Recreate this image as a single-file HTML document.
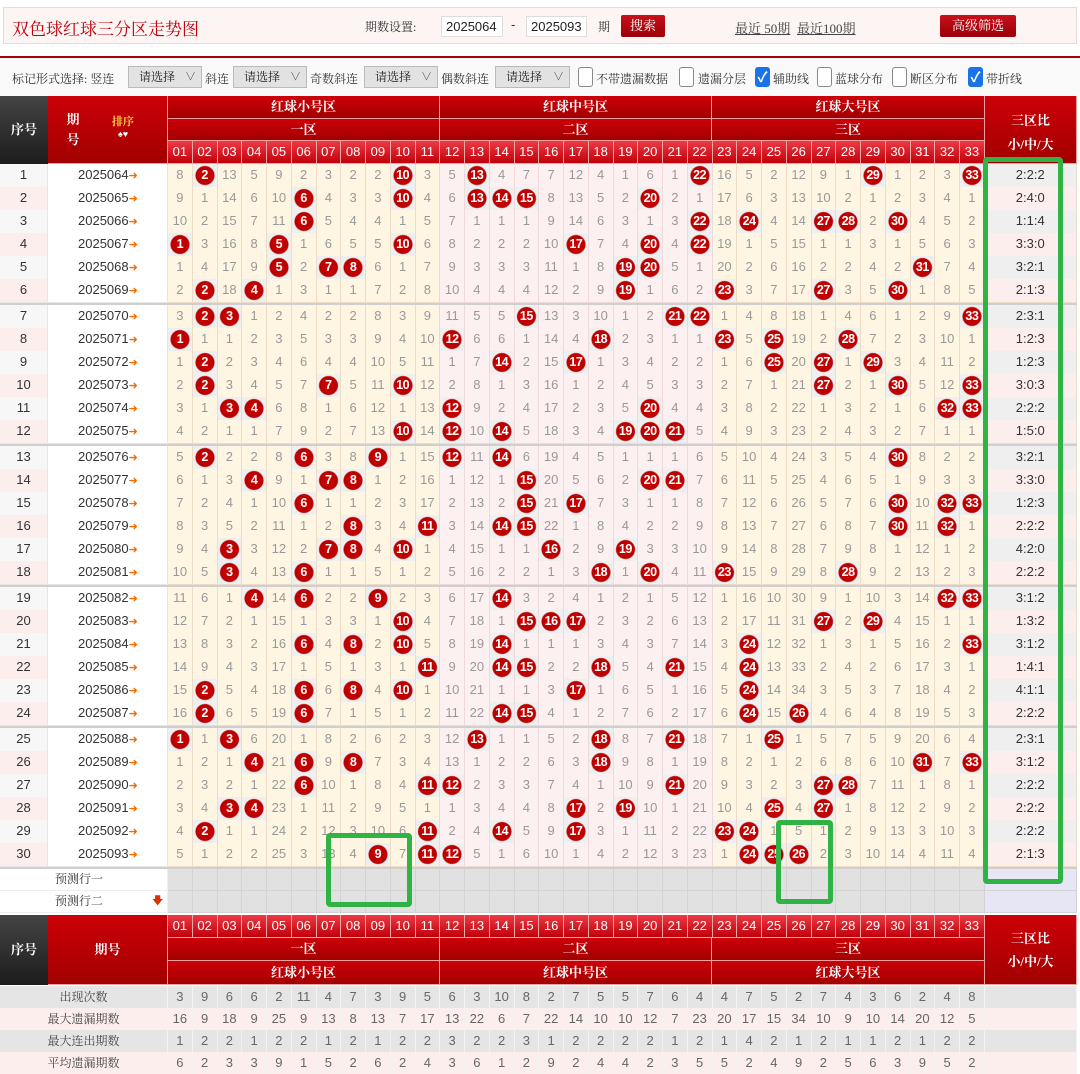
<!DOCTYPE html>
<html><head><meta charset="utf-8">
<style>
*{box-sizing:border-box;margin:0;padding:0}
i{font-style:normal}
body{width:1080px;height:1065px;overflow:hidden;background:#fff;font-family:"Liberation Sans","Noto Sans CJK SC",sans-serif;position:relative;color:#333}
.ab{position:absolute}
.cn{font-family:"Liberation Serif","Noto Serif CJK SC",serif}
#top{left:3px;top:7px;width:1074px;height:37px;background:#fdf4f4;border:1px solid #f1d4d4}
.inp{background:#fff;border:1px solid #ddd;height:21px;font-size:13px;line-height:19px;padding-left:4px;color:#222}
.btn{background:linear-gradient(#c8101a,#9a0008);color:#fff;font-size:13px;text-align:center;line-height:22px;height:22px;border-radius:2px}
#line{left:0;top:56px;width:1080px;height:2px;background:#a8000a}
#flt{left:0;top:58px;width:1080px;height:38px;background:#f9f9f9}
.ft{font-size:12px;top:70px;color:#333}
.sel{top:66px;height:22px;background:#e2e2e2;border:1px solid #bbb;font-size:12px;line-height:20px;padding-left:10px;color:#222}
.sel:after{content:"∨";position:absolute;right:5px;top:0;font-size:11px;color:#444}
.cb{top:67px;width:15px;height:20px;border:1px solid #888;border-radius:3px;background:#fff}
.cb.on{background:#1a73e8;border-color:#1a73e8;color:#fff;font-size:14px;line-height:18px;text-align:center;font-weight:bold}
.red{background:linear-gradient(#cc0008,#a20000);color:#fff;text-align:center;font-size:13px;border-right:1px solid #e9a0a0;border-bottom:1px solid #e9a0a0}
.dark{background:linear-gradient(#444,#1c1c1c);color:#fff;text-align:center;font-size:13px;font-weight:bold}
.nums{display:grid;grid-template-columns:repeat(33,24.758px);height:23px}
.nums div{background:linear-gradient(#ee3a44,#c0000a);color:#fff;font-size:13px;text-align:center;line-height:22px;border-right:1px solid #f3a8a8;border-bottom:1px solid #f3a8a8}
#rows{left:0;top:164px;width:1077px}
.r{display:grid;grid-template-columns:48px 120px repeat(33,24.758px) 92px;height:23px}
.r>*{font-style:normal;font-size:13px;line-height:22px;text-align:center;color:#999;border-right:1px solid #ecdcc8;border-bottom:1px solid #ecdcc8;text-decoration:none}
.r>s{color:#333;background:#f7f7f7;border-color:#e6e6e6}
.r>u{color:#333;background:#fff;border-color:#e6e6e6;text-align:left;padding-left:30px}
.r>u a{color:#f26b00;font-size:11px}
.r>:nth-child(n+3):nth-child(-n+13),.r>:nth-child(n+25):nth-child(-n+35){background:#fff5e3}
.r>:nth-child(n+14):nth-child(-n+24){background:#fdf0f0;border-color:#eedada}
.r>b{background:radial-gradient(circle,#d00000 0,#b80000 9px,transparent 10px),#efefef!important;color:#fff;font-weight:bold;font-size:12.5px;letter-spacing:-0.5px}
.r>em{color:#333;background:#efefef}
.r:nth-child(even)>em,.r:nth-child(even)>s{background:#fdeeee}
.sep{height:3px;background:#cfcfcf}
.pr{display:grid;grid-template-columns:168px repeat(33,24.758px) 92px;height:22px}
.pr>*{background:#e1e1e1;border-right:1px solid #d3d3d3;border-bottom:1px solid #d3d3d3;font-size:12px;line-height:21px}
.pr>:first-child{background:#fff;padding-left:55px;position:relative;border-color:#eee}
.pr>:last-child{background:#e6e6f4}
.st{display:grid;grid-template-columns:168px repeat(33,24.758px) 92px;height:22px}
.st>*{font-size:13px;line-height:22px;text-align:center;color:#666;border-right:1px solid #f2f2f2}
.st.g>*{background:#e5e5e5}
.st.p>*{background:#fdeeee}
.st>:first-child{font-size:12px;color:#444}
.box{border:5px solid #2fb344;border-radius:4px}
</style></head><body>

<div id="top" class="ab"></div>
<div class="ab cn" style="left:12px;top:15px;font-size:17px;color:#c0000a">双色球红球三分区走势图</div>
<div class="ab cn" style="left:365px;top:18px;font-size:12px">期数设置:</div>
<div class="ab inp" style="left:441px;top:16px;width:62px">2025064</div>
<div class="ab" style="left:511px;top:17px;font-size:13px">-</div>
<div class="ab inp" style="left:526px;top:16px;width:61px">2025093</div>
<div class="ab cn" style="left:598px;top:18px;font-size:12px">期</div>
<div class="ab btn cn" style="left:621px;top:15px;width:44px">搜索</div>
<div class="ab cn" style="left:735px;top:18px;font-size:13px;text-decoration:underline;color:#444">最近 50期</div>
<div class="ab cn" style="left:797px;top:18px;font-size:13px;text-decoration:underline;color:#444">最近100期</div>
<div class="ab btn cn" style="left:940px;top:15px;width:76px">高级筛选</div>

<div id="line" class="ab"></div>
<div id="flt" class="ab"></div>
<div class="ab ft cn" style="left:12px">标记形式选择: 竖连</div>
<div class="ab sel cn" style="left:128px;width:74px">请选择</div>
<div class="ab ft cn" style="left:205px">斜连</div>
<div class="ab sel cn" style="left:233px;width:74px">请选择</div>
<div class="ab ft cn" style="left:310px">奇数斜连</div>
<div class="ab sel cn" style="left:364px;width:74px">请选择</div>
<div class="ab ft cn" style="left:441px">偶数斜连</div>
<div class="ab sel cn" style="left:495px;width:75px">请选择</div>
<div class="ab cb" style="left:578px"></div><div class="ab ft cn" style="left:596px">不带遗漏数据</div>
<div class="ab cb" style="left:679px"></div><div class="ab ft cn" style="left:698px">遗漏分层</div>
<div class="ab cb on" style="left:755px">✓</div><div class="ab ft cn" style="left:773px">辅助线</div>
<div class="ab cb" style="left:817px"></div><div class="ab ft cn" style="left:835px">蓝球分布</div>
<div class="ab cb" style="left:892px"></div><div class="ab ft cn" style="left:910px">断区分布</div>
<div class="ab cb on" style="left:968px">✓</div><div class="ab ft cn" style="left:986px">带折线</div>

<div class="ab dark cn" style="left:0;top:96px;width:48px;height:68px;line-height:68px">序号</div>
<div class="ab red cn" style="left:48px;top:96px;width:120px;height:68px;font-weight:bold"><div class="ab" style="left:18px;top:14px;width:14px;line-height:20px">期<br>号</div><div class="ab" style="left:64px;top:20px;font-size:11px;color:#ffd24a;line-height:12px">排序<br><span style="color:#fff;font-size:9px">♠♥</span></div></div>
<div class="ab red cn" style="left:168px;top:96px;width:272px;height:23px;line-height:22px;font-weight:bold">红球小号区</div>
<div class="ab red cn" style="left:440px;top:96px;width:272px;height:23px;line-height:22px;font-weight:bold">红球中号区</div>
<div class="ab red cn" style="left:712px;top:96px;width:273px;height:23px;line-height:22px;font-weight:bold">红球大号区</div>
<div class="ab red cn" style="left:168px;top:119px;width:272px;height:22px;line-height:21px;font-weight:bold">一区</div>
<div class="ab red cn" style="left:440px;top:119px;width:272px;height:22px;line-height:21px;font-weight:bold">二区</div>
<div class="ab red cn" style="left:712px;top:119px;width:273px;height:22px;line-height:21px;font-weight:bold">三区</div>
<div class="ab nums" style="left:168px;top:141px"><div>01</div><div>02</div><div>03</div><div>04</div><div>05</div><div>06</div><div>07</div><div>08</div><div>09</div><div>10</div><div>11</div><div>12</div><div>13</div><div>14</div><div>15</div><div>16</div><div>17</div><div>18</div><div>19</div><div>20</div><div>21</div><div>22</div><div>23</div><div>24</div><div>25</div><div>26</div><div>27</div><div>28</div><div>29</div><div>30</div><div>31</div><div>32</div><div>33</div></div>
<div class="ab red cn" style="left:985px;top:96px;width:92px;height:68px;padding-top:13px;line-height:24px;font-weight:bold">三区比<br>小/中/大</div>

<div id="rows" class="ab">
<div>
<div class="r"><s>1</s><u>2025064<a>➜</a></u><i>8</i><b>2</b><i>13</i><i>5</i><i>9</i><i>2</i><i>3</i><i>2</i><i>2</i><b>10</b><i>3</i><i>5</i><b>13</b><i>4</i><i>7</i><i>7</i><i>12</i><i>4</i><i>1</i><i>6</i><i>1</i><b>22</b><i>16</i><i>5</i><i>2</i><i>12</i><i>9</i><i>1</i><b>29</b><i>1</i><i>2</i><i>3</i><b>33</b><em>2:2:2</em></div>
<div class="r"><s>2</s><u>2025065<a>➜</a></u><i>9</i><i>1</i><i>14</i><i>6</i><i>10</i><b>6</b><i>4</i><i>3</i><i>3</i><b>10</b><i>4</i><i>6</i><b>13</b><b>14</b><b>15</b><i>8</i><i>13</i><i>5</i><i>2</i><b>20</b><i>2</i><i>1</i><i>17</i><i>6</i><i>3</i><i>13</i><i>10</i><i>2</i><i>1</i><i>2</i><i>3</i><i>4</i><i>1</i><em>2:4:0</em></div>
<div class="r"><s>3</s><u>2025066<a>➜</a></u><i>10</i><i>2</i><i>15</i><i>7</i><i>11</i><b>6</b><i>5</i><i>4</i><i>4</i><i>1</i><i>5</i><i>7</i><i>1</i><i>1</i><i>1</i><i>9</i><i>14</i><i>6</i><i>3</i><i>1</i><i>3</i><b>22</b><i>18</i><b>24</b><i>4</i><i>14</i><b>27</b><b>28</b><i>2</i><b>30</b><i>4</i><i>5</i><i>2</i><em>1:1:4</em></div>
<div class="r"><s>4</s><u>2025067<a>➜</a></u><b>1</b><i>3</i><i>16</i><i>8</i><b>5</b><i>1</i><i>6</i><i>5</i><i>5</i><b>10</b><i>6</i><i>8</i><i>2</i><i>2</i><i>2</i><i>10</i><b>17</b><i>7</i><i>4</i><b>20</b><i>4</i><b>22</b><i>19</i><i>1</i><i>5</i><i>15</i><i>1</i><i>1</i><i>3</i><i>1</i><i>5</i><i>6</i><i>3</i><em>3:3:0</em></div>
<div class="r"><s>5</s><u>2025068<a>➜</a></u><i>1</i><i>4</i><i>17</i><i>9</i><b>5</b><i>2</i><b>7</b><b>8</b><i>6</i><i>1</i><i>7</i><i>9</i><i>3</i><i>3</i><i>3</i><i>11</i><i>1</i><i>8</i><b>19</b><b>20</b><i>5</i><i>1</i><i>20</i><i>2</i><i>6</i><i>16</i><i>2</i><i>2</i><i>4</i><i>2</i><b>31</b><i>7</i><i>4</i><em>3:2:1</em></div>
<div class="r"><s>6</s><u>2025069<a>➜</a></u><i>2</i><b>2</b><i>18</i><b>4</b><i>1</i><i>3</i><i>1</i><i>1</i><i>7</i><i>2</i><i>8</i><i>10</i><i>4</i><i>4</i><i>4</i><i>12</i><i>2</i><i>9</i><b>19</b><i>1</i><i>6</i><i>2</i><b>23</b><i>3</i><i>7</i><i>17</i><b>27</b><i>3</i><i>5</i><b>30</b><i>1</i><i>8</i><i>5</i><em>2:1:3</em></div>
</div><div class="sep"></div>
<div>
<div class="r"><s>7</s><u>2025070<a>➜</a></u><i>3</i><b>2</b><b>3</b><i>1</i><i>2</i><i>4</i><i>2</i><i>2</i><i>8</i><i>3</i><i>9</i><i>11</i><i>5</i><i>5</i><b>15</b><i>13</i><i>3</i><i>10</i><i>1</i><i>2</i><b>21</b><b>22</b><i>1</i><i>4</i><i>8</i><i>18</i><i>1</i><i>4</i><i>6</i><i>1</i><i>2</i><i>9</i><b>33</b><em>2:3:1</em></div>
<div class="r"><s>8</s><u>2025071<a>➜</a></u><b>1</b><i>1</i><i>1</i><i>2</i><i>3</i><i>5</i><i>3</i><i>3</i><i>9</i><i>4</i><i>10</i><b>12</b><i>6</i><i>6</i><i>1</i><i>14</i><i>4</i><b>18</b><i>2</i><i>3</i><i>1</i><i>1</i><b>23</b><i>5</i><b>25</b><i>19</i><i>2</i><b>28</b><i>7</i><i>2</i><i>3</i><i>10</i><i>1</i><em>1:2:3</em></div>
<div class="r"><s>9</s><u>2025072<a>➜</a></u><i>1</i><b>2</b><i>2</i><i>3</i><i>4</i><i>6</i><i>4</i><i>4</i><i>10</i><i>5</i><i>11</i><i>1</i><i>7</i><b>14</b><i>2</i><i>15</i><b>17</b><i>1</i><i>3</i><i>4</i><i>2</i><i>2</i><i>1</i><i>6</i><b>25</b><i>20</i><b>27</b><i>1</i><b>29</b><i>3</i><i>4</i><i>11</i><i>2</i><em>1:2:3</em></div>
<div class="r"><s>10</s><u>2025073<a>➜</a></u><i>2</i><b>2</b><i>3</i><i>4</i><i>5</i><i>7</i><b>7</b><i>5</i><i>11</i><b>10</b><i>12</i><i>2</i><i>8</i><i>1</i><i>3</i><i>16</i><i>1</i><i>2</i><i>4</i><i>5</i><i>3</i><i>3</i><i>2</i><i>7</i><i>1</i><i>21</i><b>27</b><i>2</i><i>1</i><b>30</b><i>5</i><i>12</i><b>33</b><em>3:0:3</em></div>
<div class="r"><s>11</s><u>2025074<a>➜</a></u><i>3</i><i>1</i><b>3</b><b>4</b><i>6</i><i>8</i><i>1</i><i>6</i><i>12</i><i>1</i><i>13</i><b>12</b><i>9</i><i>2</i><i>4</i><i>17</i><i>2</i><i>3</i><i>5</i><b>20</b><i>4</i><i>4</i><i>3</i><i>8</i><i>2</i><i>22</i><i>1</i><i>3</i><i>2</i><i>1</i><i>6</i><b>32</b><b>33</b><em>2:2:2</em></div>
<div class="r"><s>12</s><u>2025075<a>➜</a></u><i>4</i><i>2</i><i>1</i><i>1</i><i>7</i><i>9</i><i>2</i><i>7</i><i>13</i><b>10</b><i>14</i><b>12</b><i>10</i><b>14</b><i>5</i><i>18</i><i>3</i><i>4</i><b>19</b><b>20</b><b>21</b><i>5</i><i>4</i><i>9</i><i>3</i><i>23</i><i>2</i><i>4</i><i>3</i><i>2</i><i>7</i><i>1</i><i>1</i><em>1:5:0</em></div>
</div><div class="sep"></div>
<div>
<div class="r"><s>13</s><u>2025076<a>➜</a></u><i>5</i><b>2</b><i>2</i><i>2</i><i>8</i><b>6</b><i>3</i><i>8</i><b>9</b><i>1</i><i>15</i><b>12</b><i>11</i><b>14</b><i>6</i><i>19</i><i>4</i><i>5</i><i>1</i><i>1</i><i>1</i><i>6</i><i>5</i><i>10</i><i>4</i><i>24</i><i>3</i><i>5</i><i>4</i><b>30</b><i>8</i><i>2</i><i>2</i><em>3:2:1</em></div>
<div class="r"><s>14</s><u>2025077<a>➜</a></u><i>6</i><i>1</i><i>3</i><b>4</b><i>9</i><i>1</i><b>7</b><b>8</b><i>1</i><i>2</i><i>16</i><i>1</i><i>12</i><i>1</i><b>15</b><i>20</i><i>5</i><i>6</i><i>2</i><b>20</b><b>21</b><i>7</i><i>6</i><i>11</i><i>5</i><i>25</i><i>4</i><i>6</i><i>5</i><i>1</i><i>9</i><i>3</i><i>3</i><em>3:3:0</em></div>
<div class="r"><s>15</s><u>2025078<a>➜</a></u><i>7</i><i>2</i><i>4</i><i>1</i><i>10</i><b>6</b><i>1</i><i>1</i><i>2</i><i>3</i><i>17</i><i>2</i><i>13</i><i>2</i><b>15</b><i>21</i><b>17</b><i>7</i><i>3</i><i>1</i><i>1</i><i>8</i><i>7</i><i>12</i><i>6</i><i>26</i><i>5</i><i>7</i><i>6</i><b>30</b><i>10</i><b>32</b><b>33</b><em>1:2:3</em></div>
<div class="r"><s>16</s><u>2025079<a>➜</a></u><i>8</i><i>3</i><i>5</i><i>2</i><i>11</i><i>1</i><i>2</i><b>8</b><i>3</i><i>4</i><b>11</b><i>3</i><i>14</i><b>14</b><b>15</b><i>22</i><i>1</i><i>8</i><i>4</i><i>2</i><i>2</i><i>9</i><i>8</i><i>13</i><i>7</i><i>27</i><i>6</i><i>8</i><i>7</i><b>30</b><i>11</i><b>32</b><i>1</i><em>2:2:2</em></div>
<div class="r"><s>17</s><u>2025080<a>➜</a></u><i>9</i><i>4</i><b>3</b><i>3</i><i>12</i><i>2</i><b>7</b><b>8</b><i>4</i><b>10</b><i>1</i><i>4</i><i>15</i><i>1</i><i>1</i><b>16</b><i>2</i><i>9</i><b>19</b><i>3</i><i>3</i><i>10</i><i>9</i><i>14</i><i>8</i><i>28</i><i>7</i><i>9</i><i>8</i><i>1</i><i>12</i><i>1</i><i>2</i><em>4:2:0</em></div>
<div class="r"><s>18</s><u>2025081<a>➜</a></u><i>10</i><i>5</i><b>3</b><i>4</i><i>13</i><b>6</b><i>1</i><i>1</i><i>5</i><i>1</i><i>2</i><i>5</i><i>16</i><i>2</i><i>2</i><i>1</i><i>3</i><b>18</b><i>1</i><b>20</b><i>4</i><i>11</i><b>23</b><i>15</i><i>9</i><i>29</i><i>8</i><b>28</b><i>9</i><i>2</i><i>13</i><i>2</i><i>3</i><em>2:2:2</em></div>
</div><div class="sep"></div>
<div>
<div class="r"><s>19</s><u>2025082<a>➜</a></u><i>11</i><i>6</i><i>1</i><b>4</b><i>14</i><b>6</b><i>2</i><i>2</i><b>9</b><i>2</i><i>3</i><i>6</i><i>17</i><b>14</b><i>3</i><i>2</i><i>4</i><i>1</i><i>2</i><i>1</i><i>5</i><i>12</i><i>1</i><i>16</i><i>10</i><i>30</i><i>9</i><i>1</i><i>10</i><i>3</i><i>14</i><b>32</b><b>33</b><em>3:1:2</em></div>
<div class="r"><s>20</s><u>2025083<a>➜</a></u><i>12</i><i>7</i><i>2</i><i>1</i><i>15</i><i>1</i><i>3</i><i>3</i><i>1</i><b>10</b><i>4</i><i>7</i><i>18</i><i>1</i><b>15</b><b>16</b><b>17</b><i>2</i><i>3</i><i>2</i><i>6</i><i>13</i><i>2</i><i>17</i><i>11</i><i>31</i><b>27</b><i>2</i><b>29</b><i>4</i><i>15</i><i>1</i><i>1</i><em>1:3:2</em></div>
<div class="r"><s>21</s><u>2025084<a>➜</a></u><i>13</i><i>8</i><i>3</i><i>2</i><i>16</i><b>6</b><i>4</i><b>8</b><i>2</i><b>10</b><i>5</i><i>8</i><i>19</i><b>14</b><i>1</i><i>1</i><i>1</i><i>3</i><i>4</i><i>3</i><i>7</i><i>14</i><i>3</i><b>24</b><i>12</i><i>32</i><i>1</i><i>3</i><i>1</i><i>5</i><i>16</i><i>2</i><b>33</b><em>3:1:2</em></div>
<div class="r"><s>22</s><u>2025085<a>➜</a></u><i>14</i><i>9</i><i>4</i><i>3</i><i>17</i><i>1</i><i>5</i><i>1</i><i>3</i><i>1</i><b>11</b><i>9</i><i>20</i><b>14</b><b>15</b><i>2</i><i>2</i><b>18</b><i>5</i><i>4</i><b>21</b><i>15</i><i>4</i><b>24</b><i>13</i><i>33</i><i>2</i><i>4</i><i>2</i><i>6</i><i>17</i><i>3</i><i>1</i><em>1:4:1</em></div>
<div class="r"><s>23</s><u>2025086<a>➜</a></u><i>15</i><b>2</b><i>5</i><i>4</i><i>18</i><b>6</b><i>6</i><b>8</b><i>4</i><b>10</b><i>1</i><i>10</i><i>21</i><i>1</i><i>1</i><i>3</i><b>17</b><i>1</i><i>6</i><i>5</i><i>1</i><i>16</i><i>5</i><b>24</b><i>14</i><i>34</i><i>3</i><i>5</i><i>3</i><i>7</i><i>18</i><i>4</i><i>2</i><em>4:1:1</em></div>
<div class="r"><s>24</s><u>2025087<a>➜</a></u><i>16</i><b>2</b><i>6</i><i>5</i><i>19</i><b>6</b><i>7</i><i>1</i><i>5</i><i>1</i><i>2</i><i>11</i><i>22</i><b>14</b><b>15</b><i>4</i><i>1</i><i>2</i><i>7</i><i>6</i><i>2</i><i>17</i><i>6</i><b>24</b><i>15</i><b>26</b><i>4</i><i>6</i><i>4</i><i>8</i><i>19</i><i>5</i><i>3</i><em>2:2:2</em></div>
</div><div class="sep"></div>
<div>
<div class="r"><s>25</s><u>2025088<a>➜</a></u><b>1</b><i>1</i><b>3</b><i>6</i><i>20</i><i>1</i><i>8</i><i>2</i><i>6</i><i>2</i><i>3</i><i>12</i><b>13</b><i>1</i><i>1</i><i>5</i><i>2</i><b>18</b><i>8</i><i>7</i><b>21</b><i>18</i><i>7</i><i>1</i><b>25</b><i>1</i><i>5</i><i>7</i><i>5</i><i>9</i><i>20</i><i>6</i><i>4</i><em>2:3:1</em></div>
<div class="r"><s>26</s><u>2025089<a>➜</a></u><i>1</i><i>2</i><i>1</i><b>4</b><i>21</i><b>6</b><i>9</i><b>8</b><i>7</i><i>3</i><i>4</i><i>13</i><i>1</i><i>2</i><i>2</i><i>6</i><i>3</i><b>18</b><i>9</i><i>8</i><i>1</i><i>19</i><i>8</i><i>2</i><i>1</i><i>2</i><i>6</i><i>8</i><i>6</i><i>10</i><b>31</b><i>7</i><b>33</b><em>3:1:2</em></div>
<div class="r"><s>27</s><u>2025090<a>➜</a></u><i>2</i><i>3</i><i>2</i><i>1</i><i>22</i><b>6</b><i>10</i><i>1</i><i>8</i><i>4</i><b>11</b><b>12</b><i>2</i><i>3</i><i>3</i><i>7</i><i>4</i><i>1</i><i>10</i><i>9</i><b>21</b><i>20</i><i>9</i><i>3</i><i>2</i><i>3</i><b>27</b><b>28</b><i>7</i><i>11</i><i>1</i><i>8</i><i>1</i><em>2:2:2</em></div>
<div class="r"><s>28</s><u>2025091<a>➜</a></u><i>3</i><i>4</i><b>3</b><b>4</b><i>23</i><i>1</i><i>11</i><i>2</i><i>9</i><i>5</i><i>1</i><i>1</i><i>3</i><i>4</i><i>4</i><i>8</i><b>17</b><i>2</i><b>19</b><i>10</i><i>1</i><i>21</i><i>10</i><i>4</i><b>25</b><i>4</i><b>27</b><i>1</i><i>8</i><i>12</i><i>2</i><i>9</i><i>2</i><em>2:2:2</em></div>
<div class="r"><s>29</s><u>2025092<a>➜</a></u><i>4</i><b>2</b><i>1</i><i>1</i><i>24</i><i>2</i><i>12</i><i>3</i><i>10</i><i>6</i><b>11</b><i>2</i><i>4</i><b>14</b><i>5</i><i>9</i><b>17</b><i>3</i><i>1</i><i>11</i><i>2</i><i>22</i><b>23</b><b>24</b><i>1</i><i>5</i><i>1</i><i>2</i><i>9</i><i>13</i><i>3</i><i>10</i><i>3</i><em>2:2:2</em></div>
<div class="r"><s>30</s><u>2025093<a>➜</a></u><i>5</i><i>1</i><i>2</i><i>2</i><i>25</i><i>3</i><i>13</i><i>4</i><b>9</b><i>7</i><b>11</b><b>12</b><i>5</i><i>1</i><i>6</i><i>10</i><i>1</i><i>4</i><i>2</i><i>12</i><i>3</i><i>23</i><i>1</i><b>24</b><b>25</b><b>26</b><i>2</i><i>3</i><i>10</i><i>14</i><i>4</i><i>11</i><i>4</i><em>2:1:3</em></div>
</div><div class="sep"></div>
<div class="pr cn"><div>预测行一</div><i></i><i></i><i></i><i></i><i></i><i></i><i></i><i></i><i></i><i></i><i></i><i></i><i></i><i></i><i></i><i></i><i></i><i></i><i></i><i></i><i></i><i></i><i></i><i></i><i></i><i></i><i></i><i></i><i></i><i></i><i></i><i></i><i></i><i></i></div>
<div class="pr cn"><div>预测行二<span style="position:absolute;left:152px;top:0;color:#e03000;font-size:11px">🡇</span></div><i></i><i></i><i></i><i></i><i></i><i></i><i></i><i></i><i></i><i></i><i></i><i></i><i></i><i></i><i></i><i></i><i></i><i></i><i></i><i></i><i></i><i></i><i></i><i></i><i></i><i></i><i></i><i></i><i></i><i></i><i></i><i></i><i></i><i></i></div>
</div>

<div class="ab dark cn" style="left:0;top:915px;width:48px;height:70px;line-height:70px">序号</div>
<div class="ab red cn" style="left:48px;top:915px;width:120px;height:70px;line-height:70px;font-weight:bold">期号</div>
<div class="ab nums" style="left:168px;top:915px"><div>01</div><div>02</div><div>03</div><div>04</div><div>05</div><div>06</div><div>07</div><div>08</div><div>09</div><div>10</div><div>11</div><div>12</div><div>13</div><div>14</div><div>15</div><div>16</div><div>17</div><div>18</div><div>19</div><div>20</div><div>21</div><div>22</div><div>23</div><div>24</div><div>25</div><div>26</div><div>27</div><div>28</div><div>29</div><div>30</div><div>31</div><div>32</div><div>33</div></div>
<div class="ab red cn" style="left:168px;top:938px;width:272px;height:23px;line-height:22px;font-weight:bold">一区</div>
<div class="ab red cn" style="left:440px;top:938px;width:272px;height:23px;line-height:22px;font-weight:bold">二区</div>
<div class="ab red cn" style="left:712px;top:938px;width:273px;height:23px;line-height:22px;font-weight:bold">三区</div>
<div class="ab red cn" style="left:168px;top:961px;width:272px;height:24px;line-height:23px;font-weight:bold">红球小号区</div>
<div class="ab red cn" style="left:440px;top:961px;width:272px;height:24px;line-height:23px;font-weight:bold">红球中号区</div>
<div class="ab red cn" style="left:712px;top:961px;width:273px;height:24px;line-height:23px;font-weight:bold">红球大号区</div>
<div class="ab red cn" style="left:985px;top:915px;width:92px;height:70px;padding-top:12px;line-height:23px;font-weight:bold">三区比<br>小/中/大</div>

<div class="ab" style="left:0;top:986px;width:1077px">
<div class="st g"><div class="cn">出现次数</div><i>3</i><i>9</i><i>6</i><i>6</i><i>2</i><i>11</i><i>4</i><i>7</i><i>3</i><i>9</i><i>5</i><i>6</i><i>3</i><i>10</i><i>8</i><i>2</i><i>7</i><i>5</i><i>5</i><i>7</i><i>6</i><i>4</i><i>4</i><i>7</i><i>5</i><i>2</i><i>7</i><i>4</i><i>3</i><i>6</i><i>2</i><i>4</i><i>8</i><i></i></div>
<div class="st p"><div class="cn">最大遗漏期数</div><i>16</i><i>9</i><i>18</i><i>9</i><i>25</i><i>9</i><i>13</i><i>8</i><i>13</i><i>7</i><i>17</i><i>13</i><i>22</i><i>6</i><i>7</i><i>22</i><i>14</i><i>10</i><i>10</i><i>12</i><i>7</i><i>23</i><i>20</i><i>17</i><i>15</i><i>34</i><i>10</i><i>9</i><i>10</i><i>14</i><i>20</i><i>12</i><i>5</i><i></i></div>
<div class="st g"><div class="cn">最大连出期数</div><i>1</i><i>2</i><i>2</i><i>1</i><i>2</i><i>2</i><i>1</i><i>2</i><i>1</i><i>2</i><i>2</i><i>3</i><i>2</i><i>2</i><i>3</i><i>1</i><i>2</i><i>2</i><i>2</i><i>2</i><i>1</i><i>2</i><i>1</i><i>4</i><i>2</i><i>1</i><i>2</i><i>1</i><i>1</i><i>2</i><i>1</i><i>2</i><i>2</i><i></i></div>
<div class="st p"><div class="cn">平均遗漏期数</div><i>6</i><i>2</i><i>3</i><i>3</i><i>9</i><i>1</i><i>5</i><i>2</i><i>6</i><i>2</i><i>4</i><i>3</i><i>6</i><i>1</i><i>2</i><i>9</i><i>2</i><i>4</i><i>4</i><i>2</i><i>3</i><i>5</i><i>5</i><i>2</i><i>4</i><i>9</i><i>2</i><i>5</i><i>6</i><i>3</i><i>9</i><i>5</i><i>2</i><i></i></div>
</div>

<div class="ab box" style="left:326px;top:833px;width:86px;height:74px"></div>
<div class="ab box" style="left:776px;top:820px;width:57px;height:84px"></div>
<div class="ab box" style="left:983px;top:157px;width:80px;height:727px"></div>
</body></html>
